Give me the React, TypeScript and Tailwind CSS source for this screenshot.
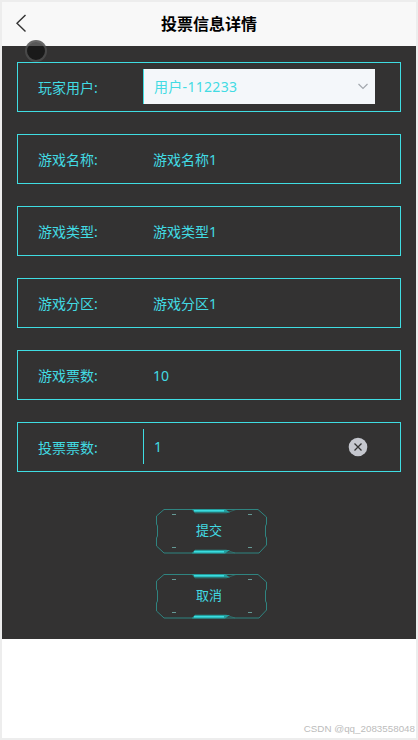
import React from 'react';

const rows = [
  { label: '游戏名称:', value: '游戏名称1' },
  { label: '游戏类型:', value: '游戏类型1' },
  { label: '游戏分区:', value: '游戏分区1' },
  { label: '游戏票数:', value: '10' },
];

function Row({ label, children }: { label: string; children: React.ReactNode }) {
  return (
    <div className="flex h-[50px] items-center border border-[#3fdde2] pl-5">
      <span className="w-[105px] shrink-0 pt-0.5 text-sm leading-5">{label}</span>
      {children}
    </div>
  );
}

function TechButton({ label }: { label: string }) {
  return (
    <button className="relative flex h-[46px] w-[112px] items-center justify-center pb-0.5 pr-[6px] text-[13px] leading-5">
      <svg className="absolute inset-0" width="112" height="46" viewBox="0 0 112 46" fill="none">
        <g stroke="#2f8480">
          <path d="M8 1.500H102L110.500 9V16L109.500 18V28L110.500 30V37L103 45H8L.5 38V30L1.500 28V18L.5 16V8Z" />
          <path d="M36 1.500L39 5H70L80 1.500M36 45L39 42H70L79 45" strokeOpacity=".6" />
          <path d="M16 6.500H20M92 6.500H96M16 39.500H20M92 39.500H96" stroke="#659995" />
        </g>
        <path d="M36 1H69L74 4.500H39ZM36 45.500H69L74 42H39Z" fill="#239e9e" />
        <path d="M38 2.700H68M38 43.800H68" stroke="#3bdcdf" strokeWidth="1.500" />
      </svg>
      <span className="relative">{label}</span>
    </button>
  );
}

export default function App() {
  return (
    <div className="relative h-[740px] w-[418px] bg-[#ededed] p-0.5 font-['Noto_Sans','Noto_Sans_CJK_SC',sans-serif]">
      <div className="flex h-[736px] w-[414px] flex-col bg-white">
        <header className="grid h-11 grid-cols-[44px_1fr_44px] items-center bg-[#f8f8f8]">
          <svg className="mb-0.5 ml-3" width="14" height="20" viewBox="0 0 14 20" fill="none" stroke="#333" strokeWidth="1.400">
            <path d="M11.500 2L3 10.300L11.500 18.500" />
          </svg>
          <h1 className="text-center text-base font-bold text-black">投票信息详情</h1>
        </header>
        <main className="flex h-[593px] flex-col bg-[#333232] px-[15px] pt-4 text-[#42dbe3]">
          <div className="flex flex-col gap-[22px]">
            <Row label="玩家用户:">
              <div className="mb-0.5 flex h-[35px] w-[232px] items-center justify-between border-l border-[#3fdde2] bg-[#f4f7fa] pl-2.5 pr-1.5">
                <span className="pt-px text-sm tracking-[0.3px]">用户-112233</span>
                <svg width="12" height="8" viewBox="0 0 12 8" fill="none" stroke="#a3a8ae" strokeWidth="1.200">
                  <path d="M1.500 2L6 6.500L10.500 2" />
                </svg>
              </div>
            </Row>
            {rows.map((row) => (
              <Row key={row.label} label={row.label}>
                <span className="pl-2.5 pt-0.5 text-sm">{row.value}</span>
              </Row>
            ))}
            <Row label="投票票数:">
              <div className="mb-0.5 flex h-[35px] w-[232px] items-center justify-between border-l border-[#3fdde2] pl-2.5 pr-[7px]">
                <span className="pt-0.5 text-sm">1</span>
                <svg className="mt-px" width="20" height="20" viewBox="0 0 20 20" fill="none">
                  <circle cx="10" cy="10" r="9.300" fill="#c5c7ce" />
                  <path d="M6.500 6.500L13.500 13.500M13.500 6.500L6.500 13.500" stroke="#333" strokeWidth="1.300" />
                </svg>
              </div>
            </Row>
          </div>
          <div className="ml-[139px] mt-9 flex flex-col gap-[19px]">
            <TechButton label="提交" />
            <TechButton label="取消" />
          </div>
        </main>
        <footer className="flex flex-1 items-end justify-end pb-[3px] pr-px font-['Liberation_Sans',sans-serif] text-[9.8px] leading-3 text-[#bcbcbc]">
          CSDN @qq_2083558048
        </footer>
      </div>
      <div className="absolute left-[25px] top-10 size-[22px] rounded-full border-2 border-[#77777780] bg-[#101010b0]" />
    </div>
  );
}
